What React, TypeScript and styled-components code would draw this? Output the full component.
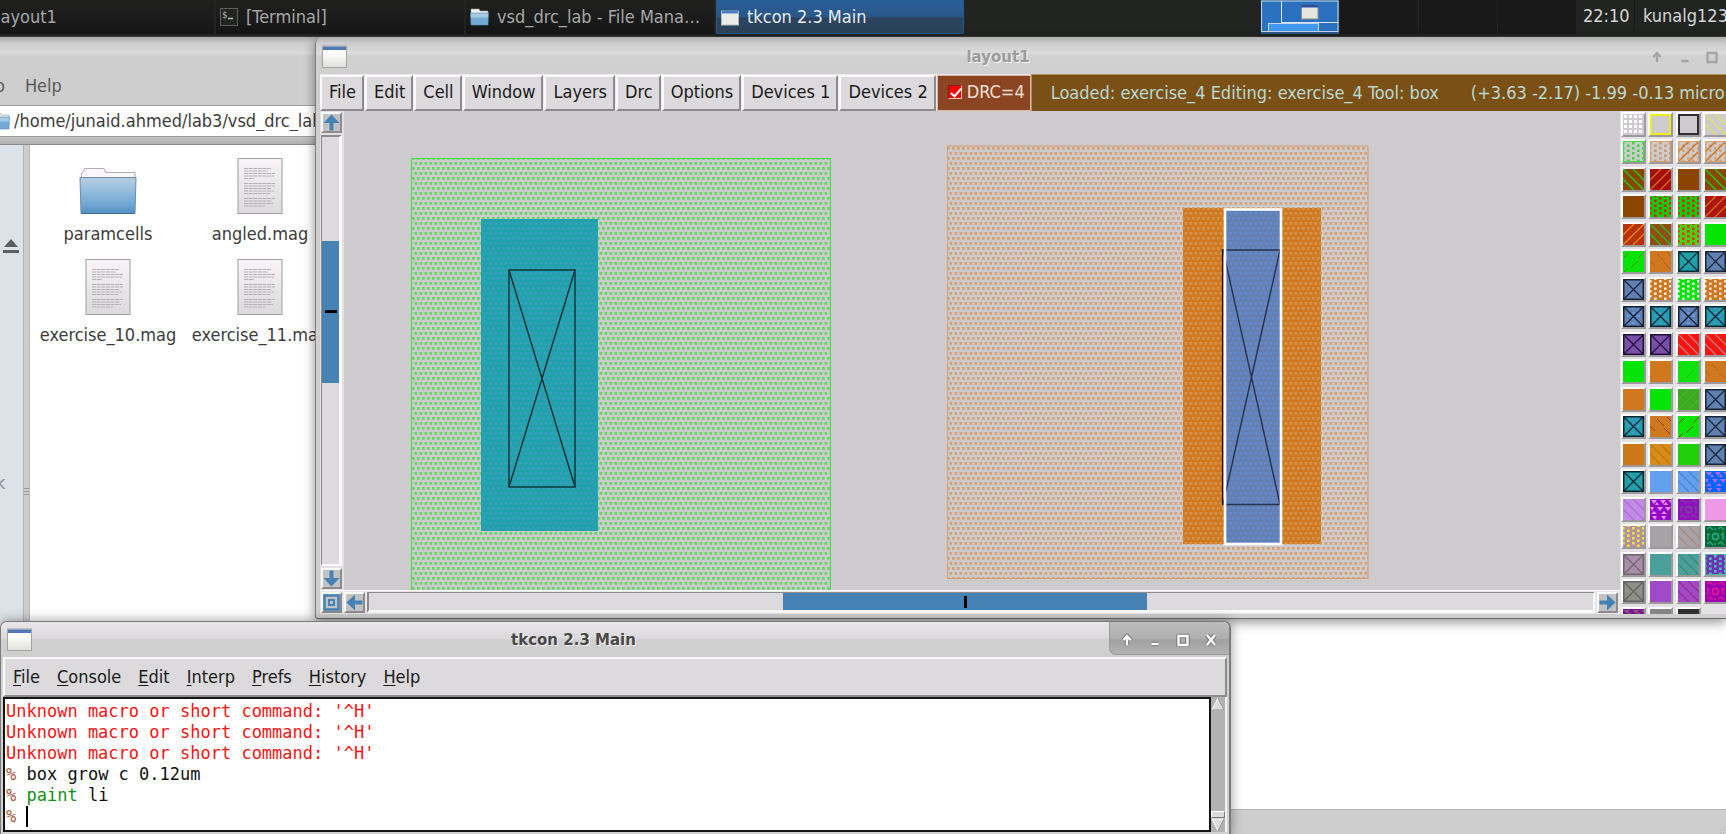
import React from "react";
import styled, { createGlobalStyle, css } from "styled-components";

const SANS = '"DejaVu Sans Condensed", "DejaVu Sans", "Liberation Sans", sans-serif';
const SANS_WIDE = '"DejaVu Sans", "Liberation Sans", sans-serif';
const MONO = '"DejaVu Sans Mono", "Liberation Mono", monospace';
const STEEL = "#4682b4";

const GlobalStyle = createGlobalStyle`
  * { box-sizing: border-box; }
  html, body { margin: 0; padding: 0; }
  body { overflow: hidden; font: 18px/20px ${SANS}; color: #1a1a1a; }
  button, input { font: inherit; color: inherit; margin: 0; padding: 0; border: 0; background: none; border-radius: 0; }
  svg { display: block; flex: none; }
`;

const Desktop = styled.div`
  position: relative;
  display: flex;
  flex-direction: column;
  width: 100%;
  height: 100vh;
  overflow: hidden;
  background: #cecece;
`;

/* ---------- top panel ---------- */

const Panel = styled.header`
  display: flex;
  flex: none;
  height: 37px;
  background: #222421;
  border-bottom: 1px solid #3a3b3a;
  overflow: hidden;
`;

const TaskList = styled.nav`
  display: flex;
  flex: 1;
  gap: 2px;
  margin-left: -34px;
  min-width: 0;
`;

const Task = styled.button<{ $active?: boolean }>`
  display: flex;
  align-items: center;
  gap: 8px;
  flex: 0 1 248px;
  height: 34px;
  padding: 0 4px;
  color: #a6a8a6;
  white-space: nowrap;
  overflow: hidden;
  background: linear-gradient(#20211f, #1a1b1a 50%, #141514);
  ${(p) =>
    p.$active &&
    css`
      color: #e6ecf2;
      background: linear-gradient(#285f99, #2a5688 50%, #2b435c 55%, #2b435c);
      border: 1px solid #245a94;
      border-top: 0;
      border-radius: 0 0 2px 2px;
    `}
`;

const Pager = styled.div`
  display: flex;
  flex: none;
  height: 34px;
`;

const Workspace = styled.button`
  width: 78px;
  height: 34px;
  margin-right: 1px;
  background: #191919;
`;

const Tray = styled.div`
  display: flex;
  flex: 0 0 149px;
  align-items: center;
  height: 32px;
  color: #d4d6d4;
  white-space: nowrap;
  overflow: hidden;
`;

const Clock = styled.time`
  flex: none;
  width: 57px;
  padding-left: 6px;
`;

const UserButton = styled.button`
  flex: none;
  padding-left: 8px;
  height: 32px;
  border-left: 1px solid #191919;
`;

/* ---------- file manager ---------- */

const FileManager = styled.section`
  display: flex;
  flex: 1;
  flex-direction: column;
  min-height: 0;
  color: #3c3c3c;
`;

const FmMenu = styled.div`
  display: flex;
  align-items: flex-end;
  gap: 20px;
  flex: none;
  height: 69px;
  padding: 0 0 9px;
  color: #5a5a5a;
  background: linear-gradient(#a8a8a8, #cccccc 6px, #dadada 16px, #cecece 20px, #cecece);
  border-bottom: 1px solid #a2a2a2;
`;

const FmMenuItem = styled.button<{ $cut?: boolean }>`
  margin-left: ${(p) => (p.$cut ? "-5px" : "0")};
`;

const PathBar = styled.label`
  display: flex;
  align-items: center;
  gap: 4px;
  flex: none;
  height: 31px;
  background: #fff;
  border-bottom: 1px solid #9a9a9a;

  svg {
    margin-left: -9px;
  }

  input {
    flex: 1;
    outline: none;
  }
`;

const Toolstrip = styled.div`
  flex: none;
  height: 8px;
  background: linear-gradient(#c6c6c6, #b0b0b0);
  border-bottom: 1px solid #8c8c8c;
`;

const FmBody = styled.div`
  display: flex;
  flex: 1;
  min-height: 0;
`;

const Sidebar = styled.aside`
  display: flex;
  flex: none;
  flex-direction: column;
  width: 23px;
  padding-top: 94px;
  background: #dce2e7;
  color: #8a8e92;
  overflow: hidden;

  button {
    padding-left: 3px;
    margin-bottom: 219px;
  }

  span {
    margin-left: -4px;
  }
`;

const Splitter = styled.div`
  display: flex;
  flex: none;
  align-items: flex-start;
  justify-content: center;
  width: 7px;
  padding-top: 342px;
  background: #cecece;
  border-left: 1px solid #b4b4b4;
  border-right: 1px solid #b8b8b8;
`;

const FileGrid = styled.div`
  display: grid;
  flex: 1;
  grid-template-columns: repeat(2, 152px);
  grid-auto-rows: 101px;
  align-content: start;
  padding: 13px 0 0 2px;
  background: #fff;
`;

const FileItem = styled.button`
  display: flex;
  flex-direction: column;
  align-items: center;
  gap: 10px;
  height: 86px;
  white-space: nowrap;
`;

const StatusBar = styled.footer`
  display: flex;
  flex: none;
  align-items: flex-end;
  justify-content: flex-end;
  height: 25px;
  border-top: 1px solid #b4b4b4;
  background: #cecece;
`;

/* ---------- shared window parts ---------- */

const WindowTitle = styled.h1<{ $dim?: boolean }>`
  flex: 1;
  margin: 0;
  padding-left: 6px;
  text-align: center;
  font: bold 15px/20px ${SANS_WIDE};
  color: ${(p) => (p.$dim ? "#9c9c9c" : "#484848")};
  text-shadow: 1px 1px 0 #f4f4f4;
`;

const TitleButton = styled.button`
  display: grid;
  place-items: center;
  width: 28px;
  height: 28px;
`;

/* ---------- layout editor window ---------- */

const LayoutWindow = styled.section`
  position: absolute;
  top: 37px;
  left: 315px;
  right: 0;
  height: 582px;
  display: flex;
  flex-direction: column;
  padding: 0 0 4px 4px;
  background: #cfcfcf;
  border-left: 1px solid #7e7e7e;
  border-bottom: 1px solid #6a6a6a;
  border-radius: 7px 0 0 3px;
  box-shadow: 0 3px 12px rgba(0, 0, 0, 0.45);
  overflow: hidden;
`;

const LayoutTitleBar = styled.header`
  display: flex;
  align-items: center;
  flex: none;
  height: 37px;
  margin-left: -4px;
  padding: 2px 0 0 6px;
  background: linear-gradient(#adadad, #cccccc 6px, #dcdcdc 16px, #d0d0d0 20px, #d0d0d0);
`;

const LayoutTitleButtons = styled.div`
  display: flex;
  flex: 0 0 83px;
  overflow: hidden;
`;

const Toolbar = styled.div`
  display: flex;
  flex: none;
  height: 37px;
  padding-top: 1px;
  background: #eceaec;
  overflow: hidden;
`;

const raised = css`
  border: 2px solid;
  border-color: #fbfafb #8d8b8d #8d8b8d #fbfafb;
`;

const ToolbarButton = styled.button`
  ${raised}
  flex: none;
  padding: 0 6px 2px 7px;
  margin-right: 1px;
  background: #dcdadc;
`;

const DrcToggle = styled.label`
  display: flex;
  align-items: center;
  gap: 5px;
  flex: none;
  width: 94px;
  padding: 0 0 2px 10px;
  color: #f6e0d6;
  background: #8c4522;
  border: 1px solid #d9b8a6;

  input {
    appearance: none;
    position: relative;
    width: 14px;
    height: 14px;
    background: #f80000;
    border: 1px solid;
    border-color: #7a2020 #f0c0b0 #f0c0b0 #7a2020;
  }

  input:checked::after {
    content: "";
    position: absolute;
    left: 4px;
    top: 0;
    width: 4px;
    height: 9px;
    border: solid #fff;
    border-width: 0 2px 2px 0;
    transform: rotate(40deg);
  }
`;

const EditorStatus = styled.div`
  display: flex;
  flex: 1;
  align-items: center;
  gap: 32px;
  min-width: 0;
  margin-top: -1px;
  padding: 0 0 1px 19px;
  color: #b9d9d1;
  background: #7a5017;
  border: solid #a98f66;
  border-width: 1px 0 0 1px;
  white-space: nowrap;
  overflow: hidden;
`;

const EditorBody = styled.div`
  display: flex;
  flex: 1;
  min-height: 0;
`;

const EditorMain = styled.div`
  display: flex;
  flex: 1;
  flex-direction: column;
  min-width: 0;
  background: #f2f1f2;
`;

const CanvasRow = styled.div`
  display: flex;
  flex: 1;
  min-height: 0;
`;

const VerticalBar = styled.div`
  display: flex;
  flex: none;
  flex-direction: column;
  gap: 2px;
  width: 24px;
  padding: 1px 2px 1px 1px;
  background: #e2e0e2;
`;

const Canvas = styled.div`
  flex: 1;
  min-width: 0;
  overflow: hidden;
  background: #cecbce;
`;

const HorizontalBar = styled.div`
  display: flex;
  flex: none;
  gap: 2px;
  height: 24px;
  padding: 1px 2px 1px 1px;
  background: #e8e6e8;
  border-top: 1px solid #fff;
`;

const ArrowButton = styled.button`
  ${raised}
  display: grid;
  place-items: center;
  flex: none;
  width: 21px;
  height: 21px;
  background: #c2c2c2;
`;

const Trough = styled.div<{ $vertical?: boolean }>`
  display: flex;
  flex: 1;
  flex-direction: ${(p) => (p.$vertical ? "column" : "row")};
  background: #dcdadc;
  border: 2px solid;
  border-color: #8d8b8d #fbfafb #fbfafb #8d8b8d;
  border-width: ${(p) => (p.$vertical ? "2px 3px 2px 1px" : "1px 2px 3px 2px")};
`;

const TroughSpace = styled.div<{ $grow: number }>`
  flex: ${(p) => p.$grow} 0 0;
`;

const Thumb = styled.div<{ $grow: number }>`
  display: grid;
  place-items: center;
  flex: ${(p) => p.$grow} 0 0;
  background: ${STEEL};
`;

const ThumbMark = styled.div<{ $vertical?: boolean }>`
  width: ${(p) => (p.$vertical ? "12px" : "3px")};
  height: ${(p) => (p.$vertical ? "3px" : "12px")};
  background: #000;
`;

const Palette = styled.div`
  display: grid;
  flex: 0 0 106px;
  grid-template-columns: 27px 28px 27px 28px;
  grid-template-rows: repeat(10, 27px 28px);
  padding: 1px 0 0 1px;
  background: #e4e1e4;
  overflow: hidden;
`;

const SwatchButton = styled.button`
  border: 2px solid;
  border-color: #fff #9b999b #9b999b #fff;
  width: 25px;
  height: 25px;
  background: #cecbce;
`;

/* ---------- console window ---------- */

const ConsoleWindow = styled.section`
  position: absolute;
  top: 621px;
  left: 0;
  width: 1231px;
  padding: 0 2px 4px;
  background: #d2d1d2;
  border: 1px solid #7c7c7c;
  border-right-width: 2px;
  border-radius: 7px 7px 0 0;
  box-shadow: 0 0 12px rgba(0, 0, 0, 0.4);
`;

const ConsoleTitleBar = styled.header`
  display: flex;
  align-items: center;
  height: 35px;
  margin: 0 -2px;
  padding-left: 6px;
  background: linear-gradient(#e8e6e8, #dcdadc 16px, #d0d0d0 18px, #cecece);
  border-radius: 6px 6px 0 0;
`;

const ConsoleTitleButtons = styled.div`
  display: flex;
  align-items: center;
  align-self: flex-start;
  height: 33px;
  padding: 3px 4px 0 3px;
  background: linear-gradient(#bcbcbc, #b0b0b0 16px, #a2a2a2 18px, #b2b2b2);
  border: solid #9a9a9a;
  border-width: 0 0 1px 1px;
  border-radius: 0 6px 0 7px;
`;

const ConsoleMenu = styled.nav`
  display: flex;
  align-items: center;
  gap: 17px;
  height: 40px;
  padding: 0 0 1px 8px;
  background: #dcdadc;
  border: 2px solid;
  border-color: #fbfafb #8d8b8d #8d8b8d #fbfafb;

  u {
    text-underline-offset: 2px;
  }
`;

const ConsoleBody = styled.div`
  display: flex;
  height: 135px;
`;

const ConsoleText = styled.div`
  flex: 1;
  padding: 2px 1px 0;
  font: 17px/21px ${MONO};
  background: #fff;
  border: 2px solid #141414;
`;

const Line = styled.div<{ $error?: boolean }>`
  display: flex;
  height: 21px;
  white-space: pre;
  color: ${(p) => (p.$error ? "#f61414" : "#111")};

  input {
    flex: 1;
    outline: none;
    caret-color: transparent;
  }
`;

const Prompt = styled.span`
  color: #a65a48;
`;

const Command = styled.span`
  color: #159015;
`;

const Cursor = styled.span`
  width: 2px;
  background: #000;
`;

const ConsoleScroll = styled.div`
  display: flex;
  flex: none;
  flex-direction: column;
  width: 16px;
  background: #b3b1b3;
  border-right: 2px solid #f4f3f4;

  button {
    height: 14px;
  }
`;

const ScrollSpace = styled.div`
  flex: 1;
`;

const ScrollThumb = styled.div`
  height: 7px;
  background: #dcdadc;
  border: 1px solid;
  border-color: #fff #7d7b7d #7d7b7d #fff;
`;

/* ---------- icons ---------- */

function WindowIcon() {
  return (
    <svg width="25" height="24" viewBox="0 0 25 24">
      <defs>
        <linearGradient id="winicon" x1="0" y1="0" x2="0" y2="1">
          <stop offset="0.3" stopColor="#fff" />
          <stop offset="1" stopColor="#dfe0d8" />
        </linearGradient>
      </defs>
      <rect x="0.5" y="1" width="24" height="21.5" fill="url(#winicon)" stroke="#a3a5a0" />
      <rect x="1" y="1.5" width="23" height="3.5" fill="#5079b4" />
    </svg>
  );
}

function SmallWindowIcon() {
  return (
    <svg width="18" height="20" viewBox="0 0 18 20">
      <rect x="0.5" y="4" width="17" height="14" fill="#ecece8" stroke="#bdbdb8" />
      <rect x="1" y="3.5" width="16" height="3" fill="#4c80c4" />
    </svg>
  );
}

function TerminalIcon() {
  return (
    <svg width="18" height="20" viewBox="0 0 18 20">
      <rect x="0.5" y="1.5" width="17" height="17" fill="#222422" stroke="#5c5e5c" />
      <text x="2" y="11" fontSize="9" fontFamily={MONO} fill="#b8bab8">
        $
      </text>
      <path d="M8 11.5h5" stroke="#b8bab8" strokeWidth="1.5" />
    </svg>
  );
}

function SmallFolder() {
  return (
    <svg width="19" height="18" viewBox="0 0 19 18">
      <path d="M1 1h8l1 2h8v6H1z" fill="#f2f2f2" stroke="#9a9a9a" strokeWidth="0.6" />
      <path d="M0.5 5h18l-0.5 12H1z" fill="#74aad6" stroke="#5b8fbb" strokeWidth="0.6" />
      <path d="M1 5.5h17v4H1z" fill="#a5cbe6" />
    </svg>
  );
}

function FolderIcon() {
  return (
    <svg width="58" height="56" viewBox="0 0 58 56">
      <defs>
        <linearGradient id="folder" x1="0" y1="0" x2="0" y2="1">
          <stop offset="0" stopColor="#b6d0e3" />
          <stop offset="0.7" stopColor="#76aad6" />
          <stop offset="1" stopColor="#5291c2" />
        </linearGradient>
      </defs>
      <path d="M2.5 22V15l2-1 1-3.500h19.500l1.500 4h29.500v8z" fill="#fbf8fb" stroke="#b0aeb0" />
      <path d="M1 19.500h56l-1 36H2z" fill="url(#folder)" stroke="#6f8ba3" />
      <path d="M2 55.500h54" stroke="#456f94" />
    </svg>
  );
}

const PAGE_LINES = [27, 24, 31, 30, 10, 0, 31, 31, 27, 30, 26, 0, 31, 28, 29, 21];

function TextFileIcon() {
  return (
    <svg width="46" height="56" viewBox="0 0 46 56">
      <defs>
        <linearGradient id="page" x1="0" y1="0" x2="0" y2="1">
          <stop offset="0" stopColor="#f8f4f8" />
          <stop offset="1" stopColor="#dcdadc" />
        </linearGradient>
      </defs>
      <rect x="1" y="0.500" width="44" height="55" fill="url(#page)" stroke="#a2a0a2" />
      {PAGE_LINES.map((w, i) => (
        <path key={i} d={`M7 ${10.5 + i * 2.5}h${w}`} stroke="#b2b0b2" strokeDasharray="4 0.600" />
      ))}
    </svg>
  );
}

type Direction = "up" | "down" | "left" | "right";
const ANGLE: Record<Direction, number> = { up: 0, right: 90, down: 180, left: 270 };

function Arrow({ to }: { to: Direction }) {
  return (
    <svg width="17" height="17" viewBox="0 0 17 17">
      <path
        d="M8.500 0.500L16.500 9H10.500v7.500h-4V9H0.500z"
        fill={STEEL}
        transform={`rotate(${ANGLE[to]} 8.500 8.500)`}
      />
    </svg>
  );
}

function ZoomIcon() {
  return (
    <svg width="17" height="17" viewBox="0 0 17 17" fill="none" stroke={STEEL}>
      <rect x="1.500" y="1.500" width="14" height="14" strokeWidth="2.500" />
      <rect x="6" y="6" width="5" height="5" strokeWidth="2" />
    </svg>
  );
}

type Control = "shade" | "minimize" | "maximize" | "close";
const CONTROL_PATH: Record<Control, string> = {
  shade: "M7 12V4M3.500 7L7 3l3.500 4",
  minimize: "M3.500 11h7",
  maximize: "M2.500 3h9v9h-9z",
  close: "M3 2l8 10M11 2l-8 10",
};

function ControlIcon({ kind, dim }: { kind: Control; dim?: boolean }) {
  return (
    <svg width="14" height="14" viewBox="0 0 14 14" fill="none">
      {!dim && <path d={CONTROL_PATH[kind]} stroke="#7c7c7c" strokeWidth="4.500" strokeLinejoin="round" />}
      <path d={CONTROL_PATH[kind]} stroke={dim ? "#a4a4a4" : "#fff"} strokeWidth="2.300" />
      {!dim && kind === "maximize" && <rect x="5.500" y="6" width="3" height="3" fill="#b0b0b0" />}
    </svg>
  );
}

/* ---------- layer palette ---------- */

type Kind = "solid" | "grid" | "outline" | "back" | "slash" | "dots" | "dotslash" | "dash" | "dashback" | "x" | "xdots" | "zig" | "rings";
type Swatch = [Kind, string, string?, string?];

const BROWN = "#8b4500";
const GREEN = "#05e405";
const ORANGE = "#cf7820";
const TEAL = "#20a0a8";
const BLUE = "#6080b0";
const GREY = "#cecbce";

const LAYERS: Swatch[] = [
  ["grid", GREY, "#fff"], ["outline", GREY, "#f0ec20"], ["outline", GREY, "#2e2e2e"], ["back", GREY, "#e4e060"],
  ["dots", GREY, "#40d840", "#40e040"], ["dots", GREY, "#d09868", "#d8a070"], ["dotslash", GREY, "#d07820", "#d8a070"], ["dotslash", GREY, "#d07820", "#d8a070"],
  ["back", BROWN, "#18d018"], ["slash", "#a50c0c", "#c8701c"], ["solid", BROWN], ["back", BROWN, "#18d018"],
  ["solid", BROWN], ["dots", "#0ad00a", "#e81818"], ["dots", "#0ad00a", "#e81818"], ["slash", "#b01410", "#c8701c"],
  ["slash", "#b8300c", "#e08c14"], ["back", "#924c14", "#20c020"], ["dots", "#44d414", "#f02c14"], ["solid", GREEN],
  ["dash", GREEN, "#3c8c10"], ["dashback", ORANGE, "#a06030"], ["x", TEAL, "#0c2c34"], ["x", BLUE, "#182438"],
  ["x", BLUE, "#182438"], ["dots", ORANGE, "#f4e8dc"], ["dots", GREEN, "#e0f8e0"], ["dots", ORANGE, "#ecdcd0"],
  ["xdots", BLUE, "#141c30", "#6498e8"], ["xdots", TEAL, "#0c2430", "#4c90d8"], ["xdots", BLUE, "#141c30", "#6498e8"], ["xdots", TEAL, "#0c2430", "#4c90d8"],
  ["x", "#7850a8", "#20103c"], ["x", "#7850a8", "#20103c"], ["back", "#fc1410", "#c07878"], ["back", "#fc1410", "#c07878"],
  ["solid", GREEN], ["solid", ORANGE], ["dash", "#10e410", "#30b818"], ["dashback", ORANGE, "#b06828"],
  ["solid", ORANGE], ["solid", GREEN], ["slash", "#40a824", "#30c018"], ["x", BLUE, "#182438"],
  ["xdots", TEAL, "#0c2430", "#4c90d8"], ["dashback", ORANGE, "#884010"], ["dash", GREEN, "#904010"], ["x", BLUE, "#182438"],
  ["solid", "#cc7818"], ["back", "#d88c18", "#c07818"], ["solid", "#20d008"], ["x", BLUE, "#182438"],
  ["x", TEAL, "#082430"], ["solid", "#64a0f0"], ["back", "#64a0f0", "#5084cc"], ["zig", "#0860fc", "#a070e8"],
  ["back", "#c08ce8", "#b070cc"], ["zig", "#9008c8", "#f08cf0"], ["rings", "#9010c0", "#7c3c9c"], ["solid", "#f098e8"],
  ["dots", "#b090a8", "#f0e820"], ["solid", "#a5a3a5"], ["back", "#a5a3a5", "#b08878"], ["rings", "#086838", "#28a078"],
  ["x", "#a890a8", "#706470"], ["solid", "#4ca09c"], ["back", "#4ca09c", "#408878"], ["dots", "#7030b8", "#48c8b0", "#48b8a0"],
  ["x", "#8c8f8a", "#606460"], ["solid", "#a04ac8"], ["back", "#a04ac8", "#a02c90"], ["rings", "#9c00b0", "#d81898"],
  ["zig", "#8010a0", "#806060"], ["solid", "#868486"], ["solid", "#303130"],
];

function staggered(): string {
  let d = "";
  for (let c = 0; c < 5; c++) {
    for (let r = 0; r < 5; r++) d += `M${c * 5 - 1} ${r * 5 + (c % 2 ? -1.5 : 1)}h2.600v2.600h-2.600z`;
  }
  return d;
}

function squares(): string {
  let d = "";
  for (let c = 0; c < 4; c++) for (let r = 0; r < 4; r++) d += `M${c * 5 + 1} ${r * 5 + 1}h3v3h-3z`;
  return d;
}

const DOTS = staggered();
const SQUARES = squares();
const BACK = "M-10 0l21 21M0 0l21 21M10 0l21 21";
const SLASH = "M31 0l-21 21M21 0l-21 21M11 0l-21 21";

function SwatchArt({ swatch: [kind, bg, fg, extra] }: { swatch: Swatch }) {
  const border = (color?: string, w = 2) =>
    color ? <rect x={w / 2} y={w / 2} width={21 - w} height={21 - w} fill="none" stroke={color} strokeWidth={w} /> : null;
  return (
    <svg width="21" height="21" viewBox="0 0 21 21" fill="none">
      <rect width="21" height="21" fill={bg} />
      {kind === "grid" && <path d={SQUARES} fill={fg} />}
      {kind === "outline" && border(fg)}
      {kind === "back" && <path d={BACK} stroke={fg} strokeWidth="1.400" />}
      {kind === "slash" && <path d={SLASH} stroke={fg} strokeWidth="1.400" />}
      {kind === "dots" && <path d={DOTS} fill={fg} />}
      {kind === "dots" && border(extra, 1)}
      {kind === "dotslash" && (
        <>
          <path d={DOTS} fill={extra} />
          <path d={SLASH} stroke={fg} strokeWidth="1.500" />
          {border(extra, 1)}
        </>
      )}
      {kind === "dash" && <path d="M1 7l5-5M8 17l7-7M15 7l6-6M1 21l4-4" stroke={fg} strokeWidth="1" />}
      {kind === "dashback" && <path d="M7 3l7 7M0 10l5 5M14 12l6 6M17 1l4 4" stroke={fg} strokeWidth="1" />}
      {kind === "xdots" && <path d={DOTS} fill={extra} />}
      {(kind === "x" || kind === "xdots") && (
        <>
          <path d="M1 1l19 19M20 1L1 20" stroke={fg} strokeWidth="1.200" />
          {border(fg, 1.5)}
        </>
      )}
      {kind === "zig" && (
        <path
          d="M1 1h6l-3 4zM10 1h6l-3 4zM18 1h3v3zM5 6l4 0-2-3zM13 6h5l-2-3zM0 8h4l-2 4zM7 8h6l-3 4zM15 8h6l-3 4zM1 15h6l-3-3zM11 15h6l-3-3zM2 17h5l-2 4zM11 17h5l-2 4z"
          fill={fg}
        />
      )}
      {kind === "rings" && (
        <>
          <circle cx="10.500" cy="10.500" r="3" stroke={fg} strokeWidth="1.800" />
          <path d="M2 3l3-2 3 3M13 3l3-2 3 3M2 10l3-2M16 8l3 3M2 18l3-2 3 3M13 18l3-2 3 3M10 2v2M10 17v2M3 7v7M18 6v8" stroke={fg} strokeWidth="1.500" />
        </>
      )}
    </svg>
  );
}

/* ---------- chip drawing ---------- */

function Stipple({ id, color }: { id: string; color: string }) {
  return (
    <pattern id={id} width="5" height="10" patternUnits="userSpaceOnUse" x="411" y="156">
      <path d="M1 1h2.700v2.700h-2.700zM-1.500 6h2.700v2.700h-2.700zM3.500 6h2.700v2.700h-2.700z" fill={color} />
    </pattern>
  );
}

function ChipDrawing() {
  return (
    <svg width="1276" height="480" viewBox="344 111 1276 480" role="img" aria-label="exercise_4 layout">
      <defs>
        <Stipple id="nwell" color="#62d862" />
        <Stipple id="pwell" color="#d6a070" />
        <Stipple id="tealDots" color="#389cbc" />
        <Stipple id="orangeDots" color="#d4924c" />
        <Stipple id="blueDots" color="#6488cc" />
      </defs>
      <rect x="411.5" y="158.5" width="419" height="450" fill="url(#nwell)" stroke="#48dc48" />
      <rect x="481" y="219" width="117" height="312" fill="#20a2aa" />
      <rect x="481" y="219" width="117" height="312" fill="url(#tealDots)" />
      <g stroke="#0c3034" strokeWidth="1.400" fill="none">
        <rect x="509" y="270" width="66" height="217" />
        <path d="M509 270l66 217M575 270l-66 217" />
      </g>

      <rect x="947.5" y="146" width="420.500" height="432.500" fill="url(#pwell)" stroke="#d8a070" />
      <rect x="1183" y="208" width="138" height="336" fill="#cf7820" />
      <rect x="1183" y="208" width="138" height="336" fill="url(#orangeDots)" />
      <rect x="1225" y="209.5" width="56" height="335" fill="#6480b2" />
      <rect x="1225" y="209.5" width="56" height="335" fill="url(#blueDots)" />
      <g stroke="#26324e" strokeWidth="1.400" fill="none">
        <path d="M1223 250h57M1223 504.500h57M1223 250l57 254.500M1280 250l-57 254.500" />
      </g>
      <path d="M1222.500 249v256" stroke="#1c1408" strokeWidth="1.200" />
      <rect x="1225" y="209.500" width="56" height="334.500" fill="none" stroke="#fff" strokeWidth="2.600" />
    </svg>
  );
}

/* ---------- composition ---------- */

const FILES = [
  { name: "paramcells", folder: true },
  { name: "angled.mag" },
  { name: "exercise_10.mag" },
  { name: "exercise_11.mag" },
];

const EDITOR_MENUS = ["File", "Edit", "Cell", "Window", "Layers", "Drc", "Options", "Devices 1", "Devices 2"];
const CONSOLE_MENUS = ["File", "Console", "Edit", "Interp", "Prefs", "History", "Help"];
const ERROR_TEXT = "Unknown macro or short command: '^H'";

function TopPanel() {
  return (
    <Panel>
      <TaskList>
        <Task>
          <SmallWindowIcon />
          layout1
        </Task>
        <Task>
          <TerminalIcon />
          [Terminal]
        </Task>
        <Task>
          <SmallFolder />
          vsd_drc_lab - File Mana…
        </Task>
        <Task $active>
          <SmallWindowIcon />
          tkcon 2.3 Main
        </Task>
      </TaskList>
      <Pager>
        <Workspace aria-label="Workspace 1">
          <svg width="78" height="34" viewBox="0 0 78 34" fill="none">
            <rect width="78" height="34" fill="#2c5c8c" />
            <rect x="0.500" y="1" width="76.500" height="30.500" fill="#2a72c0" stroke="#c4d6ec" />
            <rect x="7.500" y="23.500" width="50" height="8" fill="#4298f2" stroke="#c4d6ec" />
            <path d="M20.500 1v22M20 22.500h57" stroke="#dde6f2" />
            <rect x="40.500" y="5" width="16.500" height="14" fill="#e6e6e0" stroke="#8c8c86" />
            <path d="M40 6h17.500" stroke="#2c50a0" strokeWidth="3" />
          </svg>
        </Workspace>
        <Workspace aria-label="Workspace 2" />
        <Workspace aria-label="Workspace 3" />
        <Workspace aria-label="Workspace 4" />
      </Pager>
      <Tray>
        <Clock>22:10</Clock>
        <UserButton>kunalg123</UserButton>
      </Tray>
    </Panel>
  );
}

function Files() {
  return (
    <FileManager>
      <FmMenu>
        <FmMenuItem $cut>o</FmMenuItem>
        <FmMenuItem>Help</FmMenuItem>
      </FmMenu>
      <PathBar>
        <SmallFolder />
        <input aria-label="Location" defaultValue="/home/junaid.ahmed/lab3/vsd_drc_lab/" />
      </PathBar>
      <Toolstrip />
      <FmBody>
        <Sidebar>
          <button aria-label="Eject">
            <svg width="16" height="15" viewBox="0 0 16 15" fill="#5c6064">
              <path d="M8 0l7 8H1zM0 11h16v3H0z" />
            </svg>
          </button>
          <span>k</span>
        </Sidebar>
        <Splitter>
          <svg width="5" height="10" viewBox="0 0 5 10">
            <path d="M0 1.500h5M0 4.500h5M0 7.500h5" stroke="#9a9a9a" />
          </svg>
        </Splitter>
        <FileGrid>
          {FILES.map((f) => (
            <FileItem key={f.name}>
              {f.folder ? <FolderIcon /> : <TextFileIcon />}
              {f.name}
            </FileItem>
          ))}
        </FileGrid>
      </FmBody>
      <StatusBar>
        <svg width="8" height="8" viewBox="0 0 8 8" stroke="#a4a4a4">
          <path d="M5 1h1M2 4h1M5 4h1M2 7h1M5 7h1" />
        </svg>
      </StatusBar>
    </FileManager>
  );
}

function LayoutEditor() {
  return (
    <LayoutWindow>
      <LayoutTitleBar>
        <WindowIcon />
        <WindowTitle $dim>layout1</WindowTitle>
        <LayoutTitleButtons>
          {(["shade", "minimize", "maximize"] as Control[]).map((k) => (
            <TitleButton key={k} aria-label={k}>
              <ControlIcon kind={k} dim />
            </TitleButton>
          ))}
        </LayoutTitleButtons>
      </LayoutTitleBar>
      <Toolbar>
        {EDITOR_MENUS.map((m) => (
          <ToolbarButton key={m}>{m}</ToolbarButton>
        ))}
        <DrcToggle>
          <input type="checkbox" defaultChecked />
          DRC=4
        </DrcToggle>
        <EditorStatus>
          <span>Loaded: exercise_4 Editing: exercise_4 Tool: box</span>
          <span>(+3.63 -2.17) -1.99 -0.13 microns</span>
        </EditorStatus>
      </Toolbar>
      <EditorBody>
        <EditorMain>
          <CanvasRow>
            <VerticalBar>
              <ArrowButton aria-label="Scroll up">
                <Arrow to="up" />
              </ArrowButton>
              <Trough $vertical>
                <TroughSpace $grow={104} />
                <Thumb $grow={143}>
                  <ThumbMark $vertical />
                </Thumb>
                <TroughSpace $grow={182} />
              </Trough>
              <ArrowButton aria-label="Scroll down">
                <Arrow to="down" />
              </ArrowButton>
            </VerticalBar>
            <Canvas>
              <ChipDrawing />
            </Canvas>
          </CanvasRow>
          <HorizontalBar>
            <ArrowButton aria-label="Zoom to fit">
              <ZoomIcon />
            </ArrowButton>
            <ArrowButton aria-label="Scroll left">
              <Arrow to="left" />
            </ArrowButton>
            <Trough>
              <TroughSpace $grow={414} />
              <Thumb $grow={364}>
                <ThumbMark />
              </Thumb>
              <TroughSpace $grow={446} />
            </Trough>
            <ArrowButton aria-label="Scroll right">
              <Arrow to="right" />
            </ArrowButton>
          </HorizontalBar>
        </EditorMain>
        <Palette>
          {LAYERS.map((s, i) => (
            <SwatchButton key={i} aria-label={`Layer ${i + 1}`}>
              <SwatchArt swatch={s} />
            </SwatchButton>
          ))}
        </Palette>
      </EditorBody>
    </LayoutWindow>
  );
}

function Console() {
  return (
    <ConsoleWindow>
      <ConsoleTitleBar>
        <WindowIcon />
        <WindowTitle>tkcon 2.3 Main</WindowTitle>
        <ConsoleTitleButtons>
          {(["shade", "minimize", "maximize", "close"] as Control[]).map((k) => (
            <TitleButton key={k} aria-label={k}>
              <ControlIcon kind={k} />
            </TitleButton>
          ))}
        </ConsoleTitleButtons>
      </ConsoleTitleBar>
      <ConsoleMenu>
        {CONSOLE_MENUS.map((m) => (
          <button key={m}>
            <u>{m[0]}</u>
            {m.slice(1)}
          </button>
        ))}
      </ConsoleMenu>
      <ConsoleBody>
        <ConsoleText>
          <Line $error>{ERROR_TEXT}</Line>
          <Line $error>{ERROR_TEXT}</Line>
          <Line $error>{ERROR_TEXT}</Line>
          <Line>
            <Prompt>{"% "}</Prompt>
            box grow c 0.12um
          </Line>
          <Line>
            <Prompt>{"% "}</Prompt>
            <Command>paint</Command>
            <span>{" li"}</span>
          </Line>
          <Line>
            <Prompt>{"% "}</Prompt>
            <Cursor />
            <input aria-label="Command" />
          </Line>
        </ConsoleText>
        <ConsoleScroll>
          <button aria-label="Scroll up">
            <svg width="14" height="14" viewBox="0 0 14 14">
              <path d="M7 1l6 12H1z" fill="#dcdadc" stroke="#fff" />
              <path d="M7 1l6 12H1" fill="none" stroke="#858385" />
            </svg>
          </button>
          <ScrollSpace />
          <ScrollThumb />
          <button aria-label="Scroll down">
            <svg width="14" height="14" viewBox="0 0 14 14">
              <path d="M1 1h12L7 13z" fill="#dcdadc" stroke="#fff" />
              <path d="M13 1L7 13" stroke="#858385" />
            </svg>
          </button>
        </ConsoleScroll>
      </ConsoleBody>
    </ConsoleWindow>
  );
}

export default function App() {
  return (
    <>
      <GlobalStyle />
      <Desktop>
        <TopPanel />
        <Files />
        <LayoutEditor />
        <Console />
      </Desktop>
    </>
  );
}
